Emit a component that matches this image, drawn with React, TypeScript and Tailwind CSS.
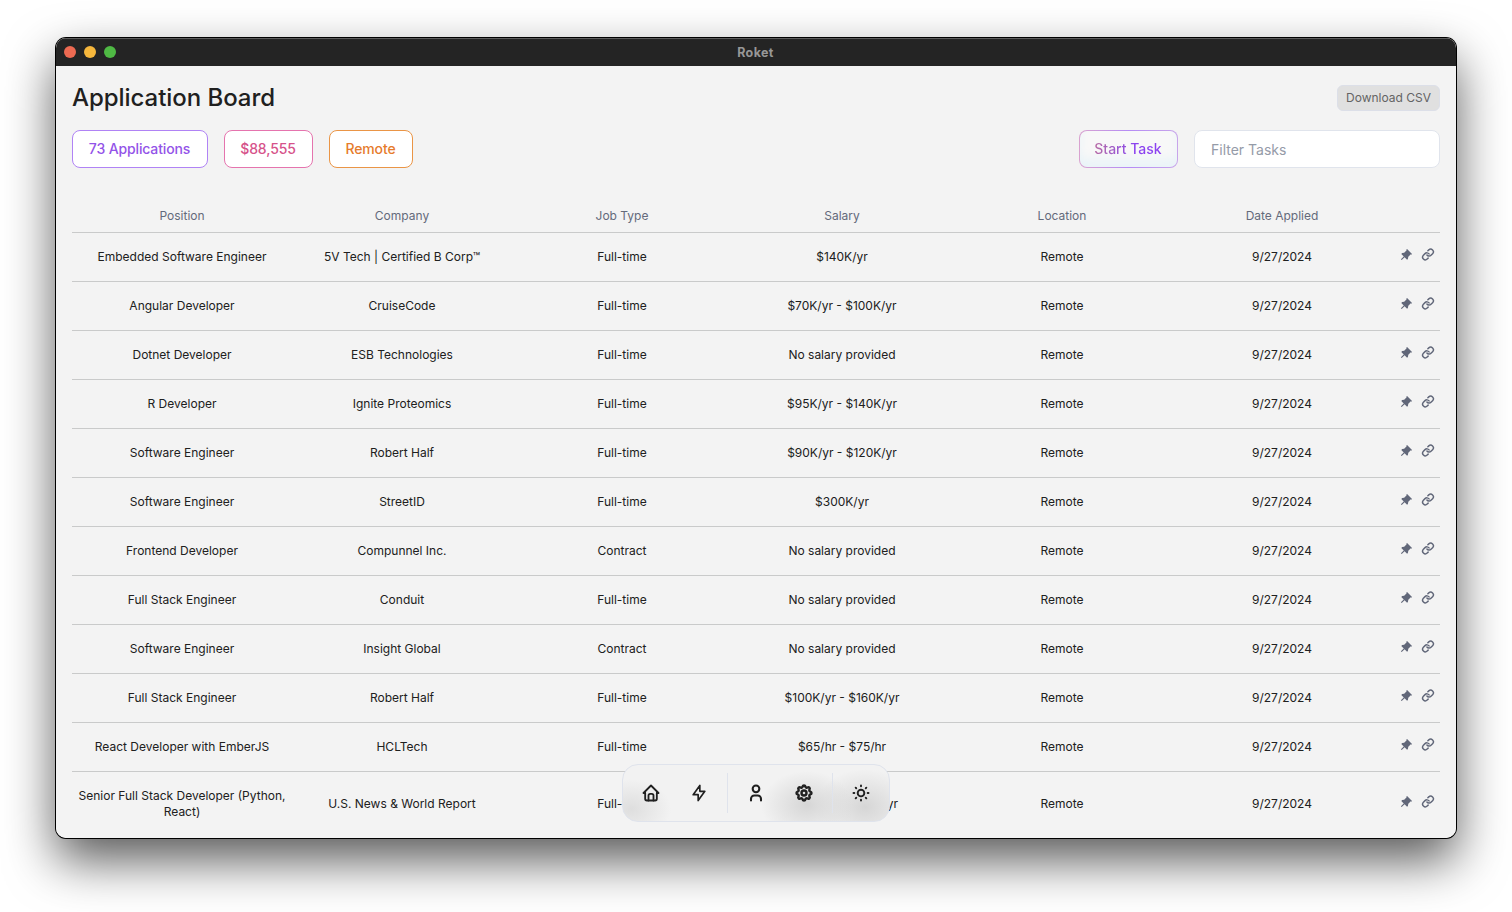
import { RiPushpinFill } from 'react-icons/ri';
import { Link } from 'lucide-react';
import { TbBolt, TbHome, TbSettings, TbSun, TbUser } from 'react-icons/tb';

const rows = [
  ['Embedded Software Engineer', '5V Tech | Certified B Corp™', 'Full-time', '$140K/yr'],
  ['Angular Developer', 'CruiseCode', 'Full-time', '$70K/yr - $100K/yr'],
  ['Dotnet Developer', 'ESB Technologies', 'Full-time', 'No salary provided'],
  ['R Developer', 'Ignite Proteomics', 'Full-time', '$95K/yr - $140K/yr'],
  ['Software Engineer', 'Robert Half', 'Full-time', '$90K/yr - $120K/yr'],
  ['Software Engineer', 'StreetID', 'Full-time', '$300K/yr'],
  ['Frontend Developer', 'Compunnel Inc.', 'Contract', 'No salary provided'],
  ['Full Stack Engineer', 'Conduit', 'Full-time', 'No salary provided'],
  ['Software Engineer', 'Insight Global', 'Contract', 'No salary provided'],
  ['Full Stack Engineer', 'Robert Half', 'Full-time', '$100K/yr - $160K/yr'],
  ['React Developer with EmberJS', 'HCLTech', 'Full-time', '$65/hr - $75/hr'],
  ['Senior Full Stack Developer (Python, React)', 'U.S. News & World Report', 'Full-time', '$110K/yr - $130K/yr'],
];

const headings = ['Position', 'Company', 'Job Type', 'Salary', 'Location', 'Date Applied'];

function TitleBar() {
  return (
    <div className="grid h-7 shrink-0 grid-cols-3 items-center bg-[#242424] px-2 shadow-[inset_0_1px_0_#5c5c5c]">
      <div className="flex gap-2">
        <span className="size-3 rounded-full bg-[#ed6a52]" />
        <span className="size-3 rounded-full bg-[#f6b73c]" />
        <span className="size-3 rounded-full bg-[#4fb944]" />
      </div>
      <div className="pt-px pr-px text-center text-[12.5px] leading-4 font-bold tracking-[0.03em] text-[#979797]">Roket</div>
    </div>
  );
}

function Row({ cells }: { cells: string[] }) {
  return (
    <div className="grid min-h-[49px] grid-cols-[repeat(6,220px)_48px] items-center border-t border-[#c9caca] py-4 text-center text-xs leading-4 text-[#202020]">
      {[...cells, 'Remote', '9/27/2024'].map((cell, i) => (
        <div key={i} className="px-1">{cell}</div>
      ))}
      <div className="-mt-1 flex h-4 items-center gap-2 pl-[7px] text-[#616779]">
        <RiPushpinFill size={14} />
        <Link size={14} viewBox="-1 0 26 26" strokeWidth={2.7} />
      </div>
    </div>
  );
}

function Dock() {
  return (
    <div className="absolute bottom-4 left-[566px] flex h-[58px] w-[268px] items-center overflow-hidden rounded-2xl border border-[#dfe3ec] bg-[#f2f2f2] bg-[radial-gradient(40px_30px_at_8px_44px,#dedede_0%,transparent_100%),radial-gradient(46px_34px_at_184px_40px,#d6d6d6_0%,transparent_100%),radial-gradient(50px_38px_at_242px_42px,#d6d6d6_0%,transparent_100%)] px-2 text-[#202020]">
      <div className="flex w-10 justify-center"><TbHome size={20} strokeWidth={2.2} /></div>
      <div className="ml-2 flex w-10 justify-center"><TbBolt size={20} /></div>
      <div className="ml-2 h-10 w-px bg-[#dfe3ec]" />
      <div className="ml-2 flex w-10 justify-center"><TbUser size={20} strokeWidth={2.5} /></div>
      <div className="ml-2 flex w-10 justify-center"><TbSettings size={20} strokeWidth={2.9} /></div>
      <div className="ml-2 h-10 w-px bg-[#dfe3ec]" />
      <div className="ml-2 flex w-10 justify-center"><TbSun size={20} strokeWidth={2.3} /></div>
    </div>
  );
}

export default function App() {
  return (
    <div className="h-[912px] w-[1512px] overflow-hidden bg-white px-14 pt-[38px] font-['Inter',sans-serif]">
      <div className="relative flex h-[800px] w-[1400px] flex-col rounded-[10px] shadow-[0_0_0_1px_#000,0_22px_50px_rgba(0,0,0,0.66)]">
        <div className="relative flex h-full flex-col overflow-hidden rounded-[10px] bg-[#f3f3f3]">
          <TitleBar />
          <main className="flex-1 px-4">
            <div className="flex h-16 items-center justify-between">
              <h1 className="text-2xl font-medium tracking-[-0.002em] text-[#202020]">Application Board</h1>
              <button className="h-[26px] rounded-md border border-[#dcdfe8] bg-[#e0e0e0] px-2 text-xs text-[#646464]">Download CSV</button>
            </div>
            <div className="flex h-[38px] justify-between text-sm">
              <div className="flex gap-4 font-medium tracking-[-0.01em]">
                <div className="flex w-[136px] items-center justify-center rounded-lg border border-[#b083f5] bg-white pr-px text-[#9353e8]">73 Applications</div>
                <div className="flex w-[89px] items-center justify-center rounded-lg border border-[#e574ae] bg-white pr-px text-[#d6528a]">$88,555</div>
                <div className="flex w-[84px] items-center justify-center rounded-lg border border-[#ea9546] bg-white pr-px text-[#e67b2c]">Remote</div>
              </div>
              <div className="flex gap-4">
                <div className="w-[99px] rounded-lg bg-linear-to-r from-[#d9a2cf] via-[#b68cf5] to-[#c8a5ea] p-px">
                  <button className="flex h-full w-full items-center justify-center rounded-[7px] bg-[#f8f8f8] font-medium shadow-[inset_0_-8px_10px_#8fdfff1f]">
                    <span className="bg-linear-to-r from-[#b86ba4] to-[#8b42f0] to-60% bg-clip-text pr-px text-transparent">Start Task</span>
                  </button>
                </div>
                <input placeholder="Filter Tasks" className="w-[246px] rounded-lg border border-[#e0e4ec] bg-white px-4 pt-0.5 text-sm placeholder:text-[#959ba8]" />
              </div>
            </div>
            <div className="grid h-16 grid-cols-[repeat(6,220px)_48px] pt-10 text-center text-xs leading-4 text-[#646a7b]">
              {headings.map((h) => <div key={h}>{h}</div>)}
            </div>
            {rows.map((cells, i) => <Row key={i} cells={cells} />)}
          </main>
          <Dock />
        </div>
      </div>
    </div>
  );
}
